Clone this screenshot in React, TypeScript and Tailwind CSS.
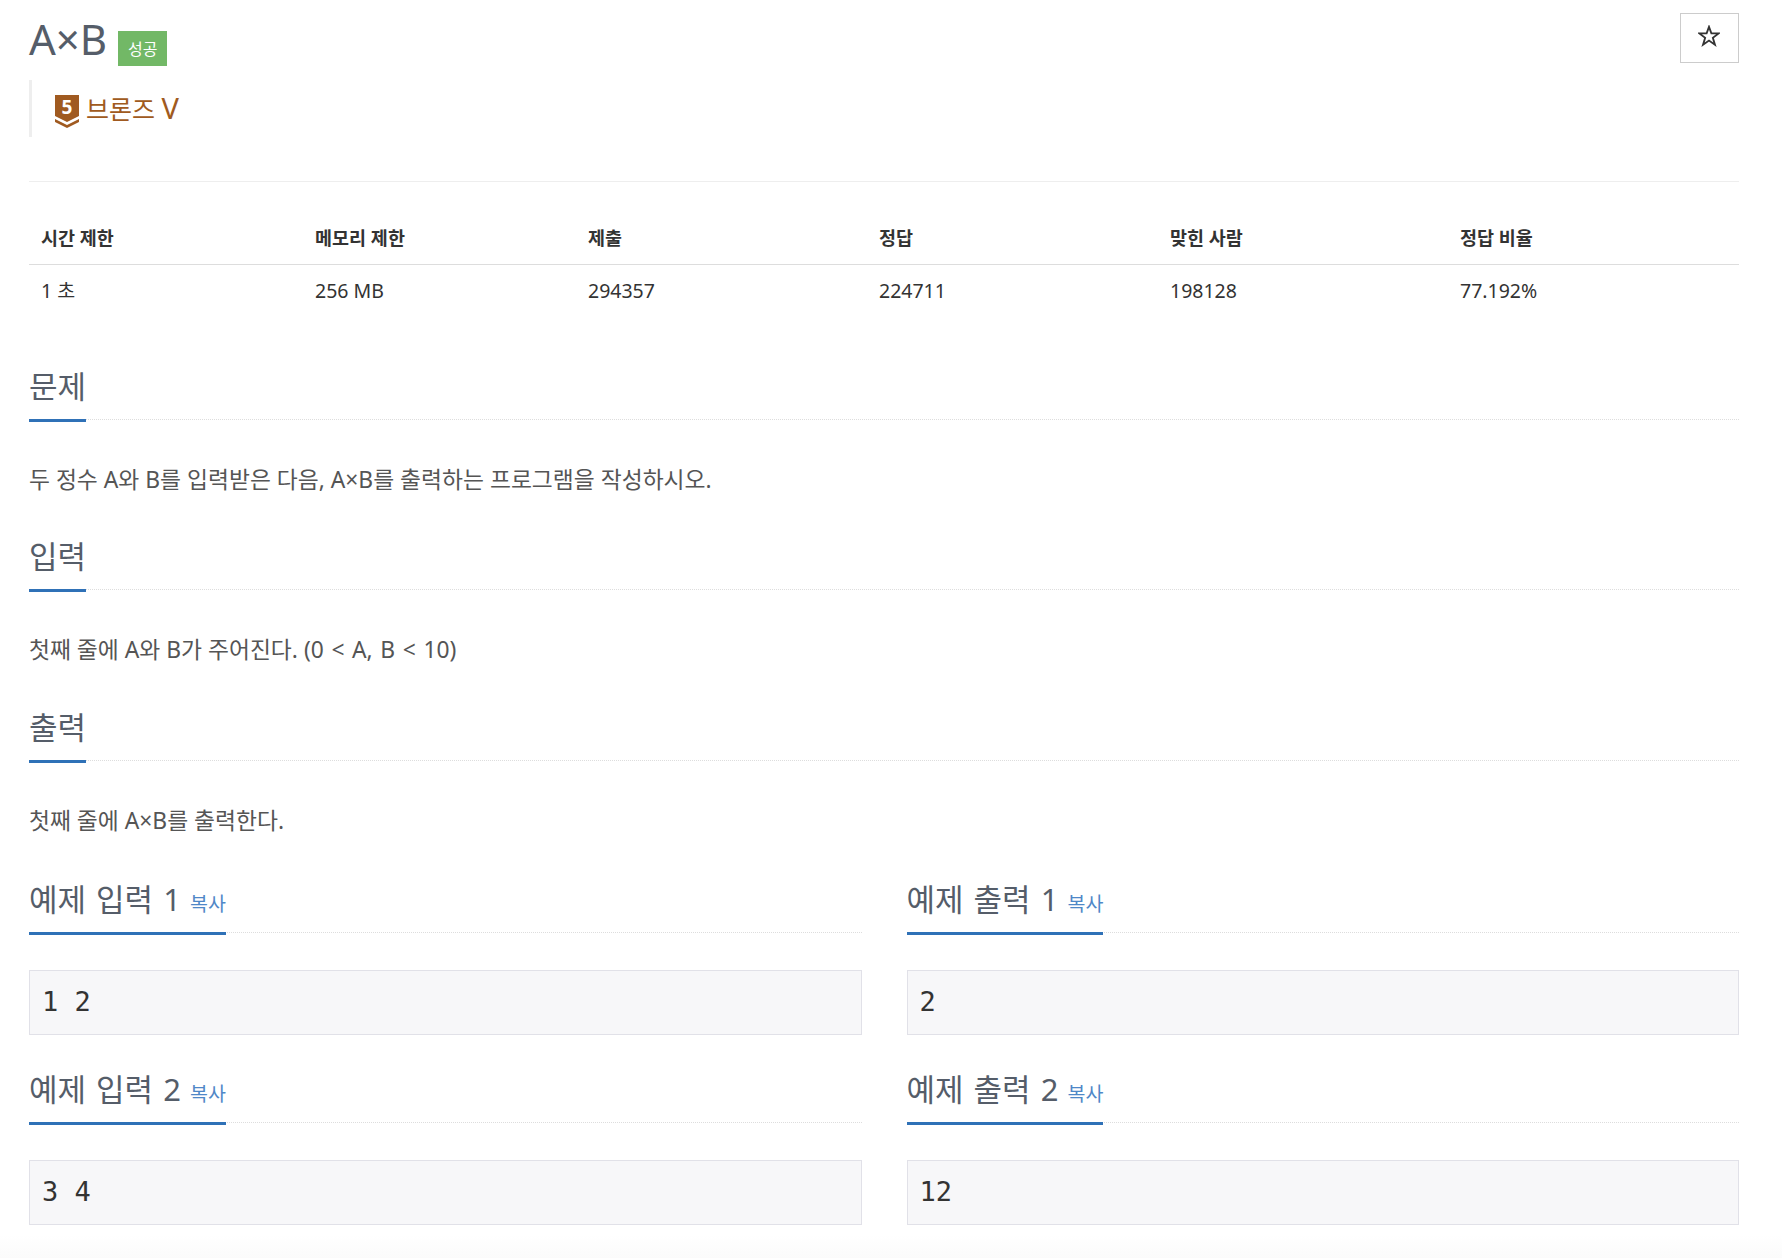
import type { ReactNode } from "react";

const Heading = ({ title, copy }: { title: string; copy?: boolean }) => (
  <div className="flex border-b border-dotted border-[#dddddd] h-[57px]">
    <h2 className="flex items-baseline h-[59px] pt-[2px] border-b-[3px] border-[#2f71b7] mb-[-3px] text-[31px] leading-[42px] text-[#555d69] font-normal [word-spacing:2px]">
      {title}
      {copy && <span className="ml-[9px] text-[19.5px] text-[#4f87c7]">복사</span>}
    </h2>
  </div>
);

const Section = ({ title, text, gap }: { title: string; text: ReactNode; gap: string }) => (
  <section className={gap}>
    <Heading title={title} />
    <p className="mt-[44px] text-[22.8px] leading-[32px] text-[#555555]">{text}</p>
  </section>
);

const Sample = ({ title, value }: { title: string; value: string }) => (
  <div>
    <Heading title={title} copy />
    <pre className="mt-[37px] h-[65px] border border-[#e1e1e8] bg-[#f7f7f9] px-[12px] pt-[14px] text-[27px] leading-[34px] text-[#333333] font-['DejaVu_Sans_Mono',monospace]">
      {value}
    </pre>
  </div>
);

const stats = [
  { label: "시간 제한", value: "1 초", width: "w-[274px]" },
  { label: "메모리 제한", value: "256 MB", width: "w-[273px]" },
  { label: "제출", value: "294357", width: "w-[291px]" },
  { label: "정답", value: "224711", width: "w-[291px]" },
  { label: "맞힌 사람", value: "198128", width: "w-[290px]" },
  { label: "정답 비율", value: "77.192%", width: "flex-1" },
];

const App = () => {
  return (
    <div className="min-h-[1258px] bg-[linear-gradient(to_bottom,#ffffff_1235px,#fbfbfb_1258px)] pl-[29px] pr-[43px] pt-[13px] font-['Noto_Sans','Noto_Sans_CJK_KR',sans-serif]">
      <div className="flex justify-between items-start h-[67px]">
        <div className="flex items-start">
          <h1 className="pt-[1px] text-[42px] leading-[50px] text-[#555d69] font-normal">A×B</h1>
          <span className="ml-[11px] mt-[18px] flex h-[35px] w-[49px] items-center justify-center bg-[#72b866] text-[16px] text-white">
            성공
          </span>
        </div>
        <button className="flex h-[50px] w-[59px] items-center justify-center border border-[#cccccc] bg-white">
          <svg className="mb-[5px] mr-[1px]" width="22" height="22" viewBox="0 0 24 24" fill="none" stroke="#333333" strokeWidth="2">
            <polygon points="12,2 14.6,9.2 22.5,9.2 16.2,14 18.5,21.5 12,17 5.5,21.5 7.8,14 1.5,9.2 9.4,9.2" />
          </svg>
        </button>
      </div>

      <div className="flex h-[57px] items-center border-l-[3px] border-[#eeeeee] pl-[23px]">
        <svg className="mt-[6px]" width="24" height="33" viewBox="0 0 24 33">
          <path d="M0 0H24V21L12 27L0 21Z" fill="#a05a20" />
          <path d="M0 24L12 30L24 24V27L12 33L0 27Z" fill="#a05a20" />
          <text x="12" y="19" textAnchor="middle" fontSize="19" fontWeight="700" fill="#ffffff">5</text>
        </svg>
        <span className="ml-[7px] text-[25px] leading-[32px] text-[#a05a20]">
          브론즈 <span className="text-[29px]">V</span>
        </span>
      </div>

      <hr className="mt-[44px] border-0 border-t border-[#eeeeee]" />

      <div className="mt-[27px] flex h-[56px] items-center border-b border-[#dddddd]">
        {stats.map((s) => (
          <div key={s.label} className={`${s.width} pl-[12px] pt-[2px] text-[18.5px] font-bold text-[#333333]`}>
            {s.label}
          </div>
        ))}
      </div>
      <div className="flex h-[53px] items-center">
        {stats.map((s) => (
          <div key={s.label} className={`${s.width} pl-[12px] pb-[1px] text-[19.5px] text-[#333333]`}>
            {s.value}
          </div>
        ))}
      </div>

      <Section gap="mt-[45px]" title="문제" text="두 정수 A와 B를 입력받은 다음, A×B를 출력하는 프로그램을 작성하시오." />
      <Section
        gap="mt-[37px]"
        title="입력"
        text={
          <>
            첫째 줄에 A와 B가 주어진다. <span className="[word-spacing:1.7px]">(0 &lt; A, B &lt; 10)</span>
          </>
        }
      />
      <Section gap="mt-[38px]" title="출력" text="첫째 줄에 A×B를 출력한다." />

      <div className="mt-[39px] grid grid-cols-2 gap-x-[45px] gap-y-[31px]">
        <Sample title="예제 입력 1" value="1 2" />
        <Sample title="예제 출력 1" value="2" />
        <Sample title="예제 입력 2" value="3 4" />
        <Sample title="예제 출력 2" value="12" />
      </div>
    </div>
  );
};

export default App;
